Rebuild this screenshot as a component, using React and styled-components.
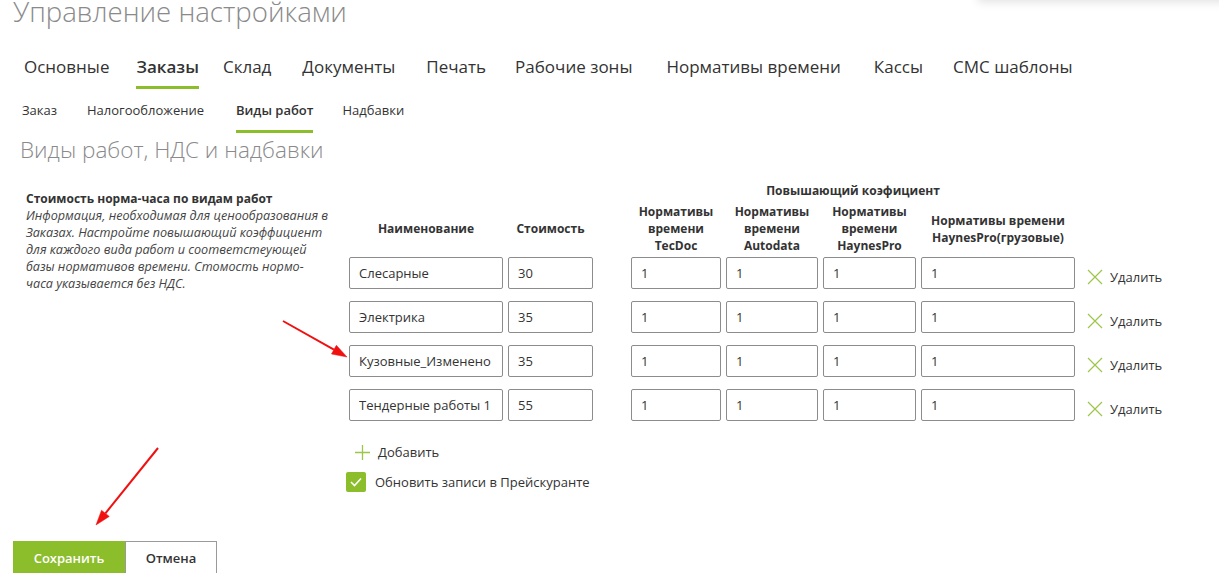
import React from "react";
import styled, { createGlobalStyle } from "styled-components";

// palette taken from the screenshot
const GREEN = "#8cbd2a";
const TEXT = "#333333";

const GlobalStyle = createGlobalStyle`
  html, body {
    margin: 0;
    padding: 0;
    background: #fff;
  }
  body {
    font-family: "Open Sans", "Noto Sans", sans-serif;
    color: ${TEXT};
    overflow: hidden;
  }
  * {
    box-sizing: border-box;
  }
`;

const Page = styled.div`
  position: relative;
  width: 1219px;
  height: 573px;
  overflow: hidden;
  padding-left: 13px;
`;

// faint edge of a dropdown hanging over the top right corner
const TopShadow = styled.div`
  position: absolute;
  top: -40px;
  left: 978px;
  right: -20px;
  height: 40px;
  background: #fff;
  box-shadow: 0 2px 9px rgba(0, 0, 0, 0.12);
`;

const PageTitle = styled.h1`
  margin: -6px 0 0;
  font-size: 27.6px;
  line-height: 34px;
  font-weight: 300;
  color: #8a8a8a;
  white-space: nowrap;
`;

const Tabs = styled.nav`
  display: flex;
  margin-top: ${(p) => p.top}px;
  padding-left: ${(p) => p.left}px;
`;

const Tab = styled.div`
  margin-left: ${(p) => p.ml}px;
  font-size: ${(p) => p.size}px;
  line-height: ${(p) => p.lh}px;
  padding-bottom: ${(p) => p.pb}px;
  font-weight: ${(p) => (p.active ? 600 : 400)};
  color: ${TEXT};
  border-bottom: 3px solid ${(p) => (p.active ? GREEN : "transparent")};
  white-space: nowrap;
  cursor: pointer;
`;

const SectionTitle = styled.h2`
  margin: 2px 0 0 7px;
  font-size: 22.5px;
  line-height: 30px;
  font-weight: 300;
  color: #8a8a8a;
`;

const Content = styled.div`
  display: flex;
  margin-top: 17px;
`;

const Aside = styled.div`
  width: 336px;
  padding: 8px 0 0 13px;
  font-size: 12px;
  line-height: 17px;
  white-space: nowrap;
`;

const AsideTitle = styled.div`
  font-weight: 700;
`;

const AsideText = styled.div`
  font-style: italic;
  font-size: 12.6px;
  color: #444;
`;

const Table = styled.div`
  display: flex;
  flex-direction: column;
`;

const GroupTitle = styled.div`
  margin-left: 282px;
  width: 444px;
  text-align: center;
  font-size: 12px;
  line-height: 17px;
  font-weight: 700;
`;

const Row = styled.div`
  display: flex;
  align-items: center;
  gap: 5px;
  margin-top: ${(p) => p.top}px;
`;

const HeadCell = styled.div`
  width: ${(p) => p.w}px;
  min-height: 51px;
  margin-right: ${(p) => p.after || 0}px;
  display: flex;
  align-items: center;
  justify-content: center;
  text-align: center;
  font-size: 12px;
  line-height: 17px;
  font-weight: 700;
`;

const Field = styled.input`
  width: ${(p) => p.w}px;
  height: 32px;
  margin-right: ${(p) => p.after || 0}px;
  padding: 0 9px;
  border: 1px solid #8c8c8c;
  border-radius: 2px;
  font-family: inherit;
  font-size: 13px;
  color: ${TEXT};
  background: #fff;
  outline: none;
`;

const LinkButton = styled.div`
  display: flex;
  align-items: center;
  gap: ${(p) => p.gap}px;
  font-size: 13px;
  line-height: 20px;
  color: ${TEXT};
  cursor: pointer;
`;

const DeleteLink = styled(LinkButton)`
  margin: 7px 0 0 7px;
`;

const AddLink = styled(LinkButton)`
  margin: 21px 0 0 6px;
`;

const CheckRow = styled.label`
  display: flex;
  align-items: center;
  gap: 9px;
  margin: 10px 0 0 -3px;
  font-size: 13px;
  line-height: 20px;
`;

const CheckBox = styled.span`
  width: 20px;
  height: 20px;
  border-radius: 2px;
  background: ${GREEN};
  display: flex;
  align-items: center;
  justify-content: center;
`;

const Footer = styled.div`
  display: flex;
  margin-top: 49px;
`;

const Button = styled.button`
  width: ${(p) => p.w}px;
  height: 34px;
  border: 1px solid ${(p) => (p.primary ? GREEN : "#9a9a9a")};
  background: ${(p) => (p.primary ? GREEN : "#fff")};
  color: ${(p) => (p.primary ? "#fff" : TEXT)};
  font-family: inherit;
  font-size: 13px;
  font-weight: 600;
  cursor: pointer;
  padding: 0;
`;

const Overlay = styled.svg`
  position: absolute;
  left: 0;
  top: 0;
  pointer-events: none;
`;

const CrossIcon = () => (
  <svg width="16" height="16" viewBox="0 0 16 16">
    <path d="M1 1 L15 15 M15 1 L1 15" stroke="#9cc64a" strokeWidth="1.2" fill="none" />
  </svg>
);

const PlusIcon = () => (
  <svg width="15" height="15" viewBox="0 0 15 15">
    <path d="M7.5 0 V15 M0 7.5 H15" stroke="#9cc64a" strokeWidth="1.3" fill="none" />
  </svg>
);

const CheckIcon = () => (
  <svg width="12" height="10" viewBox="0 0 12 10">
    <path d="M1 5 L4.5 8.5 L11 1.5" stroke="#fff" strokeWidth="1.6" fill="none" />
  </svg>
);

// red annotation arrow, head drawn at the tip
const Arrow = ({ x1, y1, x2, y2 }) => {
  const dx = x2 - x1;
  const dy = y2 - y1;
  const len = Math.hypot(dx, dy);
  const ux = dx / len;
  const uy = dy / len;
  const bx = x2 - ux * 15;
  const by = y2 - uy * 15;
  const px = -uy * 5;
  const py = ux * 5;
  return (
    <g fill="#f01010" stroke="#f01010">
      <line x1={x1} y1={y1} x2={bx} y2={by} strokeWidth="2" />
      <polygon
        points={`${x2},${y2} ${bx + px},${by + py} ${bx - px},${by - py}`}
        strokeWidth="0.5"
      />
    </g>
  );
};

// spacing between tabs is uneven in the original, so each keeps its own
const mainTabs = [
  { label: "Основные", ml: 0 },
  { label: "Заказы", ml: 27 },
  { label: "Склад", ml: 24 },
  { label: "Документы", ml: 31 },
  { label: "Печать", ml: 31 },
  { label: "Рабочие зоны", ml: 29 },
  { label: "Нормативы времени", ml: 34 },
  { label: "Кассы", ml: 33 },
  { label: "СМС шаблоны", ml: 30 },
];

const subTabs = [
  { label: "Заказ", ml: 0 },
  { label: "Налогообложение", ml: 30 },
  { label: "Виды работ", ml: 32 },
  { label: "Надбавки", ml: 29 },
];

const columns = [
  { w: 154, title: "Наименование" },
  { w: 85, title: "Стоимость", after: 33 },
  { w: 90, title: <>Нормативы<br />времени<br />TecDoc</> },
  { w: 92, title: <>Нормативы<br />времени<br />Autodata</> },
  { w: 93, title: <>Нормативы<br />времени<br />HaynesPro</> },
  { w: 154, title: <>Нормативы времени<br />HaynesPro(грузовые)</> },
];

const works = [
  { name: "Слесарные", cost: "30" },
  { name: "Электрика", cost: "35" },
  { name: "Кузовные_Изменено", cost: "35" },
  { name: "Тендерные работы 1", cost: "55" },
];

const App = () => {
  return (
    <Page>
      <GlobalStyle />
      <TopShadow />
      <PageTitle>Управление настройками</PageTitle>

      <Tabs top={27} left={11}>
        {mainTabs.map((t) => (
          <Tab key={t.label} ml={t.ml} size={17} lh={24} pb={7} active={t.label === "Заказы"}>
            {t.label}
          </Tab>
        ))}
      </Tabs>

      <Tabs top={11} left={9}>
        {subTabs.map((t) => (
          <Tab key={t.label} ml={t.ml} size={13} lh={20} pb={10} active={t.label === "Виды работ"}>
            {t.label}
          </Tab>
        ))}
      </Tabs>

      <SectionTitle>Виды работ, НДС и надбавки</SectionTitle>

      <Content>
        <Aside>
          <AsideTitle>Стоимость норма-часа по видам работ</AsideTitle>
          <AsideText>
            Информация, необходимая для ценообразования в<br />
            Заказах. Настройте повышающий коэффициент<br />
            для каждого вида работ и соответстеующей<br />
            базы нормативов времени. Стомость нормо-<br />
            часа указывается без НДС.
          </AsideText>
        </Aside>

        <Table>
          <GroupTitle>Повышающий коэфициент</GroupTitle>
          <Row top={4}>
            {columns.map((c, i) => (
              <HeadCell key={i} w={c.w} after={c.after}>
                {c.title}
              </HeadCell>
            ))}
          </Row>

          {works.map((row, i) => (
            <Row key={row.name} top={i === 0 ? 3 : 12}>
              <Field w={154} defaultValue={row.name} readOnly />
              <Field w={85} after={33} defaultValue={row.cost} readOnly />
              <Field w={90} defaultValue="1" readOnly />
              <Field w={92} defaultValue="1" readOnly />
              <Field w={93} defaultValue="1" readOnly />
              <Field w={154} defaultValue="1" readOnly />
              <DeleteLink gap={7}>
                <CrossIcon />
                Удалить
              </DeleteLink>
            </Row>
          ))}

          <AddLink gap={8}>
            <PlusIcon />
            Добавить
          </AddLink>

          <CheckRow>
            <CheckBox>
              <CheckIcon />
            </CheckBox>
            Обновить записи в Прейскуранте
          </CheckRow>
        </Table>
      </Content>

      <Footer>
        <Button primary w={112}>Сохранить</Button>
        <Button w={92}>Отмена</Button>
      </Footer>

      <Overlay width="1219" height="573">
        <Arrow x1={283} y1={321} x2={347} y2={357} />
        <Arrow x1={158} y1={448} x2={96} y2={525} />
      </Overlay>
    </Page>
  );
};

export default App;
